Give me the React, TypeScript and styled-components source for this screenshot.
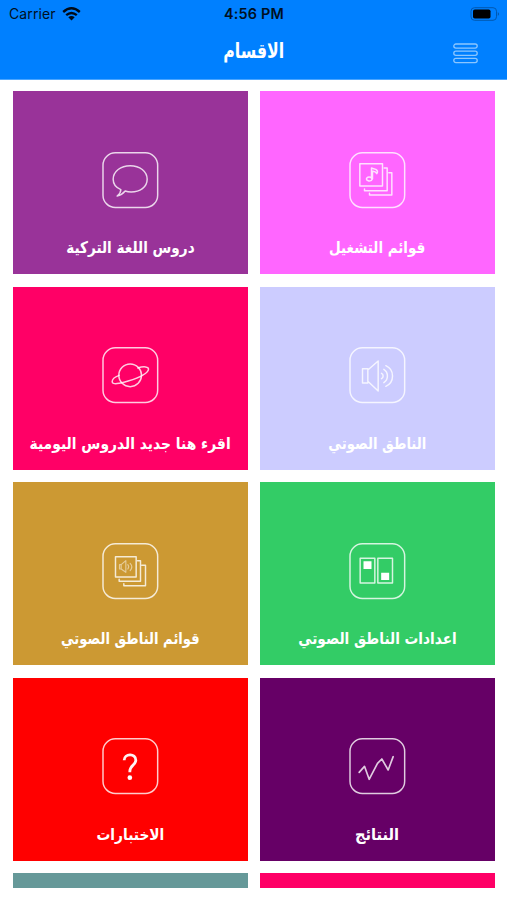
import React from 'react';
import styled, { createGlobalStyle } from 'styled-components';

const GlobalStyle = createGlobalStyle`
  * { box-sizing: border-box; }
  html, body { margin: 0; background: #fff; overflow: hidden; }
`;

const Screen = styled.div`
  width: 507px;
  height: 900px;
  display: flex;
  flex-direction: column;
  overflow: hidden;
  background: #fff;
  font-family: 'DejaVu Sans', sans-serif;
`;

const Header = styled.header`
  height: 79.5px;
  flex: none;
  background: #0080ff;
  border-bottom: 1px solid #4aa5ff;
`;

const StatusBar = styled.div`
  height: 27px;
  display: grid;
  grid-template-columns: 1fr auto 1fr;
  align-items: center;
  padding: 0 7px 0 9px;
  font-family: Inter, sans-serif;
  color: #001022;
`;

const Carrier = styled.div`
  display: flex;
  align-items: center;
  gap: 6px;
  font-size: 14px;
  letter-spacing: 0.1px;
`;

const Clock = styled.div`
  margin-right: 1px;
  font-size: 14.4px;
  font-weight: 600;
  letter-spacing: 0.2px;
`;

const BatterySlot = styled.div`
  display: flex;
  justify-content: flex-end;
`;

const NavBar = styled.div`
  height: 51px;
  display: grid;
  grid-template-columns: 1fr auto 1fr;
  align-items: center;
  padding-right: 29px;
`;

const Title = styled.h1<{ $stretch: number }>`
  grid-column: 2;
  margin: 0 0 3px 29px;
  color: #fff;
  font-size: 20.5px;
  line-height: 24px;
  font-weight: 700;
  white-space: nowrap;
  transform: scaleX(${(p) => p.$stretch});
`;

const MenuButton = styled.button`
  justify-self: end;
  display: flex;
  padding: 1px 0 0;
  border: 0;
  background: none;
`;

const Grid = styled.main`
  height: 808.3px;
  padding: 11.8px 12.4px 0 13px;
  display: grid;
  grid-template-columns: repeat(2, 234.6px);
  grid-auto-rows: 183.1px;
  gap: 12.4px;
  overflow: hidden;
`;

const Tile = styled.section<{ $color: string }>`
  display: flex;
  flex-direction: column;
  align-items: center;
  padding-top: 60.7px;
  background: ${(p) => p.$color};
`;

const IconFrame = styled.svg`
  width: 56px;
  height: 56px;
  flex: none;
  overflow: visible;
  fill: none;
  stroke: #fff;
  stroke-width: 4.4;
  stroke-opacity: 0.8;
  stroke-linecap: round;
  stroke-linejoin: round;
`;

const Label = styled.h2<{ $stretch: number }>`
  margin: 28.4px 0 0;
  color: #fff;
  font-size: 16px;
  line-height: 24px;
  font-weight: 700;
  white-space: nowrap;
  transform: scaleX(${(p) => p.$stretch});
`;

const PlaylistIcon = () => (
  <>
    <path d="M84 147V152H152V84H143M99 160V165H166V98H157" />
    <rect x="70" y="71" width="68" height="67" />
    <path d="M105 116V84Q111 86 118 88Q126 93 121 101Q116 93 108 94V116Q105 124 97 123Q87 120 91 114Q96 109 105 113" />
  </>
);

const SpeechIcon = () => (
  <path d="M94 149C79 143 71 132 71 118C71 94 94 77 122 77C151 77 173 94 173 118C173 142 151 156 125 156Q115 156 107 153Q97 165 83 168Q94 159 94 149Z" />
);

const SpeakerIcon = () => (
  <>
    <path d="M78 101H94V144H78ZM94 105L125 78V168L94 139" />
    <path d="M135 115A9 9 0 0 1 135 131M142 103A24 24 0 0 1 142 143M148 92A34 34 0 0 1 148 154" />
  </>
);

const PlanetIcon = () => (
  <>
    <circle cx="122" cy="121" r="34" />
    <path d="M145 99C163 93 178 95 177 103C175 115 145 129 116 138C91 146 68 150 68 140C68 132 77 125 89 121" />
  </>
);

const SwitchesIcon = () => (
  <>
    <path d="M71 82H115V156H71ZM124 82H168V156H124Z" />
    <path d="M81 91H105V114H81ZM134 125H158V147H134Z" fill="#fff" stroke="none" />
  </>
);

const SpeakerListIcon = () => (
  <>
    <path d="M89 145V151H153V89H144M103 158V164H168V103H157" />
    <rect x="78" y="77" width="62" height="61" />
    <path
      d="M90 101H95V114H90ZM95 101L109 89V124L95 114M115 101Q120 107 115 114M122 97Q132 107 122 119"
      strokeWidth="3.5"
      strokeOpacity=".5"
    />
  </>
);

const ChartIcon = () => <path d="M68 139L84 121L98 160L123 112L136 99L155 132L170 92" strokeWidth="5" />;

const QuestionIcon = () => (
  <>
    <path d="M104 103C104 83 139 80 139 103C139 116 121 119 121 136V139" strokeWidth="8.5" strokeOpacity=".95" strokeLinecap="butt" />
    <circle cx="121" cy="155" r="7" fill="#fff" stroke="none" />
  </>
);

type TileData = { label: string; color: string; stretch: number; Icon?: React.FC };

const tiles: TileData[] = [
  { label: 'قوائم التشغيل', color: '#ff66ff', stretch: 0.842, Icon: PlaylistIcon },
  { label: 'دروس اللغة التركية', color: '#993399', stretch: 0.851, Icon: SpeechIcon },
  { label: 'الناطق الصوتي', color: '#ccccff', stretch: 0.826, Icon: SpeakerIcon },
  { label: 'اقرء هنا جديد الدروس اليومية', color: '#ff0066', stretch: 0.866, Icon: PlanetIcon },
  { label: 'اعدادات الناطق الصوتي', color: '#33cc66', stretch: 0.856, Icon: SwitchesIcon },
  { label: 'قوائم الناطق الصوتي', color: '#cc9933', stretch: 0.822, Icon: SpeakerListIcon },
  { label: 'النتائج', color: '#660066', stretch: 0.915, Icon: ChartIcon },
  { label: 'الاختبارات', color: '#ff0000', stretch: 0.86, Icon: QuestionIcon },
  { label: '', color: '#ff0066', stretch: 1 },
  { label: '', color: '#669999', stretch: 1 },
];

export default function App() {
  return (
    <Screen>
      <GlobalStyle />
      <Header>
        <StatusBar>
          <Carrier>
            Carrier
            <svg width="19" height="14" viewBox="0 0 19 14" fill="none" stroke="#000b18" strokeWidth="2.4">
              <path d="M1.2 5Q9.5 -2.3 17.8 5M4.2 8.2Q9.5 3.8 14.8 8.2" />
              <path d="M6.3 10.2Q9.5 7.8 12.7 10.2L9.5 13.5Z" fill="#000b18" stroke="none" />
            </svg>
          </Carrier>
          <Clock>4:56 PM</Clock>
          <BatterySlot>
            <svg width="30" height="14" viewBox="0 0 30 14">
              <rect x="1" y=".7" width="25.5" height="12.6" rx="3.5" fill="none" stroke="#0058b0" />
              <rect x="3" y="2.5" width="17.5" height="9" rx="1.8" fill="#000" />
              <path d="M27.8 5Q30.4 7 27.8 9Z" fill="#0058b0" />
            </svg>
          </BatterySlot>
        </StatusBar>
        <NavBar>
          <Title dir="rtl" lang="ar" $stretch={0.768}>الاقسام</Title>
          <MenuButton aria-label="القائمة">
            <svg width="25" height="21" viewBox="0 0 25 21" fill="none" stroke="#8cc6ff" strokeWidth="1.3">
              <rect x=".8" y="1" width="23.4" height="4.2" rx="2.1" />
              <rect x=".8" y="8.2" width="23.4" height="4.2" rx="2.1" />
              <rect x=".8" y="15.4" width="23.4" height="4.2" rx="2.1" />
            </svg>
          </MenuButton>
        </NavBar>
      </Header>
      <Grid dir="rtl" lang="ar">
        {tiles.map(({ label, color, stretch, Icon }, i) => (
          <Tile key={i} $color={color}>
            {Icon && (
              <>
                <IconFrame viewBox="37.5 36 168 168">
                  <rect x="40.5" y="38.5" width="164" height="164" rx="37" />
                  <Icon />
                </IconFrame>
                <Label $stretch={stretch}>{label}</Label>
              </>
            )}
          </Tile>
        ))}
      </Grid>
    </Screen>
  );
}
